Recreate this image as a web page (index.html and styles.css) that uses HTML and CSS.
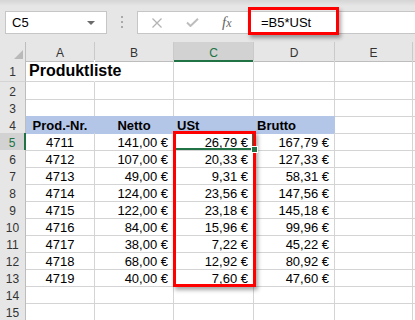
FILE: index.html
```html
<!DOCTYPE html>
<html lang="de">
<head>
    <meta charset="UTF-8">
    <meta name="viewport" content="width=device-width, initial-scale=1.0">
    <title>Produktliste</title>
    <link rel="stylesheet" href="styles.css">
</head>
<body>
    <div class="page">
        <!-- Namenfeld und Bearbeitungsleiste -->
        <div class="toolbar">
            <div class="namebox">
                <span>C5</span>
                <span class="dropdown"></span>
            </div>
            <div class="grip">
                <span></span><span></span><span></span>
            </div>
            <div class="fbar">
                <svg class="btn-cancel" width="10" height="10" viewBox="0 0 10 10">
                    <path d="M0.5 0.5 L9.5 9.5 M9.5 0.5 L0.5 9.5" stroke="#b3b3b3" stroke-width="1.3" fill="none"/>
                </svg>
                <svg class="btn-enter" width="13" height="9" viewBox="0 0 13 9">
                    <path d="M1 4.5 L4.5 8 L12 0.8" stroke="#bdbdbd" stroke-width="2" fill="none"/>
                </svg>
                <span class="fx">f<span>x</span></span>
                <span class="formula">=B5*USt</span>
            </div>
        </div>

        <!-- Tabelle -->
        <div class="sheet">
            <div class="row row-head">
                <div class="corner"><svg width="9" height="9" viewBox="0 0 9 9"><polygon points="9,0 9,9 0,9" fill="#b9b9b9"/></svg></div>
                <div class="hd">A</div>
                <div class="hd">B</div>
                <div class="hd sel">C</div>
                <div class="hd">D</div>
                <div class="hd">E</div>
                <div class="hd edge"></div>
            </div>
            <div class="row row-title">
                <div class="rh">1</div>
                <div class="cell title">Produktliste</div>
                <div class="cell"></div>
                <div class="cell"></div>
                <div class="cell"></div>
                <div class="cell"></div>
                <div class="cell edge"></div>
            </div>
            <div class="row">
                <div class="rh">2</div>
                <div class="cell"></div><div class="cell"></div><div class="cell"></div><div class="cell"></div><div class="cell"></div><div class="cell edge"></div>
            </div>
            <div class="row">
                <div class="rh">3</div>
                <div class="cell"></div><div class="cell"></div><div class="cell"></div><div class="cell"></div><div class="cell"></div><div class="cell edge"></div>
            </div>
            <div class="row">
                <div class="rh">4</div>
                <div class="cell fill ctr">Prod.-Nr.</div>
                <div class="cell fill ctr">Netto</div>
                <div class="cell fill">USt</div>
                <div class="cell fill">Brutto</div>
                <div class="cell"></div>
                <div class="cell edge"></div>
            </div>
            <div class="row">
                <div class="rh sel">5</div>
                <div class="cell ctr">4711</div><div class="cell num">141,00 €</div><div class="cell num">26,79 €</div><div class="cell num">167,79 €</div><div class="cell"></div><div class="cell edge"></div>
            </div>
            <div class="row">
                <div class="rh">6</div>
                <div class="cell ctr">4712</div><div class="cell num">107,00 €</div><div class="cell num">20,33 €</div><div class="cell num">127,33 €</div><div class="cell"></div><div class="cell edge"></div>
            </div>
            <div class="row">
                <div class="rh">7</div>
                <div class="cell ctr">4713</div><div class="cell num">49,00 €</div><div class="cell num">9,31 €</div><div class="cell num">58,31 €</div><div class="cell"></div><div class="cell edge"></div>
            </div>
            <div class="row">
                <div class="rh">8</div>
                <div class="cell ctr">4714</div><div class="cell num">124,00 €</div><div class="cell num">23,56 €</div><div class="cell num">147,56 €</div><div class="cell"></div><div class="cell edge"></div>
            </div>
            <div class="row">
                <div class="rh">9</div>
                <div class="cell ctr">4715</div><div class="cell num">122,00 €</div><div class="cell num">23,18 €</div><div class="cell num">145,18 €</div><div class="cell"></div><div class="cell edge"></div>
            </div>
            <div class="row">
                <div class="rh">10</div>
                <div class="cell ctr">4716</div><div class="cell num">84,00 €</div><div class="cell num">15,96 €</div><div class="cell num">99,96 €</div><div class="cell"></div><div class="cell edge"></div>
            </div>
            <div class="row">
                <div class="rh">11</div>
                <div class="cell ctr">4717</div><div class="cell num">38,00 €</div><div class="cell num">7,22 €</div><div class="cell num">45,22 €</div><div class="cell"></div><div class="cell edge"></div>
            </div>
            <div class="row">
                <div class="rh">12</div>
                <div class="cell ctr">4718</div><div class="cell num">68,00 €</div><div class="cell num">12,92 €</div><div class="cell num">80,92 €</div><div class="cell"></div><div class="cell edge"></div>
            </div>
            <div class="row">
                <div class="rh">13</div>
                <div class="cell ctr">4719</div><div class="cell num">40,00 €</div><div class="cell num">7,60 €</div><div class="cell num">47,60 €</div><div class="cell"></div><div class="cell edge"></div>
            </div>
            <div class="row">
                <div class="rh">14</div>
                <div class="cell"></div><div class="cell"></div><div class="cell"></div><div class="cell"></div><div class="cell"></div><div class="cell edge"></div>
            </div>
            <div class="row">
                <div class="rh">15</div>
                <div class="cell"></div><div class="cell"></div><div class="cell"></div><div class="cell"></div><div class="cell"></div><div class="cell edge"></div>
            </div>
        </div>

        <!-- Markierungen -->
        <div class="selection"></div>
        <div class="redbox rb-formula"></div>
        <div class="redbox rb-cells"></div>
        <div class="handle"></div>
    </div>
</body>
</html>
```

FILE: styles.css
```css
/* Basis */
* {
    margin: 0;
    padding: 0;
    box-sizing: border-box;
}

html, body {
    overflow: hidden;
    background: #fff;
}

body {
    font-family: "Liberation Sans", Arial, sans-serif;
    font-size: 13px;
    color: #000;
}

.page {
    position: relative;
    width: 415px;
    height: 320px;
    overflow: hidden;
}

/* Bearbeitungsleiste */
.toolbar {
    height: 42px;
    display: flex;
    align-items: flex-start;
    padding: 11px 0 0 5px;
    background: linear-gradient(#d5d5d5, #e6e6e6 6px);
}

.namebox {
    width: 102px;
    height: 23px;
    background: #fff;
    border: 1px solid #c6c6c6;
    display: flex;
    align-items: center;
    justify-content: space-between;
    padding: 0 11px 0 6px;
    line-height: 15px;
}

.dropdown {
    width: 0;
    height: 0;
    border-left: 4px solid transparent;
    border-right: 4px solid transparent;
    border-top: 4px solid #6b6b6b;
}

.grip {
    width: 30px;
    display: flex;
    flex-direction: column;
    align-items: center;
    gap: 3px;
    padding-top: 5px;
}

.grip span {
    width: 2px;
    height: 2px;
    background: #a9a9a9;
}

.fbar {
    flex: 1;
    height: 23px;
    background: #fff;
    border: 1px solid #c6c6c6;
    border-right: none;
    display: flex;
    align-items: center;
    line-height: 15px;
}

.btn-cancel {
    margin-left: 14px;
}

.btn-enter {
    margin-left: 24px;
}

.fx {
    margin-left: 23px;
    width: 14px;
    font-family: "Liberation Serif", "Times New Roman", serif;
    font-style: italic;
    font-size: 15px;
    color: #666;
}

.fx span {
    font-size: 12px;
}

.formula {
    margin-left: 25px;
}

/* Tabelle */
.row {
    display: grid;
    grid-template-columns: 26px 69px 79px 80px 81px 78px 2px;
    height: 17px;
}

.row-head {
    height: 18px;
}

.row-title {
    height: 22px;
}

.corner {
    background: #e6e6e6;
    border-right: 1px solid #bdbdbd;
    border-bottom: 1px solid #bdbdbd;
    display: flex;
    justify-content: flex-end;
    align-items: flex-end;
    padding: 0 2px 2px 0;
}

.hd {
    background: #e6e6e6;
    border-right: 1px solid #cacaca;
    border-bottom: 1px solid #bdbdbd;
    font-size: 12px;
    color: #333;
    text-align: center;
    padding-top: 4px;
    line-height: 14px;
}

.hd.sel {
    background: #d2d2d2;
    color: #217346;
    border-bottom: 2px solid #217346;
}

.rh {
    background: #e6e6e6;
    border-right: 1px solid #bdbdbd;
    border-bottom: 1px solid #d4d4d4;
    font-size: 12px;
    color: #333;
    text-align: center;
    padding-top: 3px;
    line-height: 14px;
}

.rh.sel {
    background: #d2d2d2;
    color: #217346;
    border-right: 2px solid #217346;
}

.row-title .rh {
    padding-top: 5px;
}

.cell {
    border-right: 1px solid #d4d4d4;
    border-bottom: 1px solid #d4d4d4;
    padding: 3px 5px 0 3px;
    line-height: 14px;
    white-space: nowrap;
}

.edge {
    border-right: none;
}

.num {
    text-align: right;
}

.ctr {
    text-align: center;
    padding-left: 0;
    padding-right: 0;
}

.title {
    font-size: 16px;
    font-weight: bold;
    padding-top: 2px;
    line-height: 17px;
    border-right-color: #fff;
    position: relative;
    z-index: 1;
}

.fill {
    background: #b4c6e7;
    border-color: #b4c6e7;
    font-weight: bold;
}

/* Markierungen */
.selection {
    position: absolute;
    left: 174px;
    top: 132px;
    width: 80px;
    height: 18px;
    border: 2px solid #217346;
}

.redbox {
    position: absolute;
    border: 3px solid #ff0000;
    box-shadow: 2px 3px 4px rgba(0, 0, 0, 0.35);
}

.rb-formula {
    left: 248px;
    top: 7px;
    width: 91px;
    height: 28px;
}

.rb-cells {
    left: 173px;
    top: 131px;
    width: 83px;
    height: 156px;
}

.handle {
    position: absolute;
    left: 251px;
    top: 146px;
    width: 7px;
    height: 7px;
    background: #217346;
    border: 1px solid #fff;
}
```
